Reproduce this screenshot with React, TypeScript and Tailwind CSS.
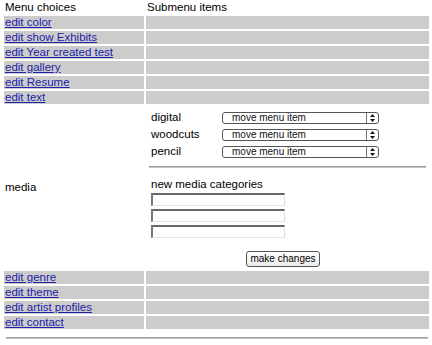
const TOP_LINKS = ['edit color', 'edit show Exhibits', 'edit Year created test', 'edit gallery', 'edit Resume', 'edit text']
const BOTTOM_LINKS = ['edit genre', 'edit theme', 'edit artist profiles', 'edit contact']
const MEDIA = ['digital', 'woodcuts', 'pencil']

function LinkRow({ label }: { label: string }) {
  return (
    <>
      <div className="h-[13px] bg-[#cccccc] pl-[1px] leading-[13px]">
        <a href="#" className="text-[#2222a8] underline underline-offset-[1px]">{label}</a>
      </div>
      <div className="h-[13px] bg-[#cccccc]" />
    </>
  )
}

function MoveSelect() {
  return (
    <div className="flex h-[12px] w-[157px] items-center rounded-[3px] border border-[#555] bg-white">
      <span className="flex-1 pl-[9px] font-['Liberation_Sans',Arial,sans-serif] text-[10px] leading-[10px] text-[#111]">
        move menu item
      </span>
      <div className="flex h-full w-[12px] items-center justify-center border-l border-[#777]">
        <svg width="5" height="8" viewBox="0 0 5 8">
          <path d="M2.5 0 L5 3 L0 3 Z M0 5 L5 5 L2.5 8 Z" fill="#111" />
        </svg>
      </div>
    </div>
  )
}

function TextBox() {
  return (
    <div className="ml-[5px] h-[13px] w-[134px] border-t-2 border-l-2 border-r border-b border-t-[#666] border-l-[#777] border-r-[#ddd] border-b-[#e4e4e4] bg-white" />
  )
}

export default function App() {
  return (
    <div className="min-h-screen bg-white font-['Liberation_Sans',Arial,sans-serif] text-[11.5px] text-black">
      <div className="pl-[4px] pt-[1px]">
        <div className="grid grid-cols-[140px_283px] gap-[2px]">
          <div className="h-[13px] pl-[1px] leading-[13px]">Menu choices</div>
          <div className="h-[13px] pl-[1px] leading-[13px]">Submenu items</div>

          {TOP_LINKS.map(l => <LinkRow key={l} label={l} />)}

          {/* media block */}
          <div className="flex h-[163px] items-center pl-[1px] leading-[13px]">media</div>
          <div className="flex h-[163px] flex-col pt-[3px]">
            {MEDIA.map(m => (
              <div key={m} className="flex h-[17px] items-center pl-[5px]">
                <span className="w-[71px] leading-[13px]">{m}</span>
                <MoveSelect />
              </div>
            ))}
            <div className="mx-[3px] mt-[6px] h-[2px] border-t border-[#9c9c9c] bg-[#c4c4c4]" />
            <div className="ml-[5px] mt-[10px] h-[13px] leading-[13px]">new media categories</div>
            <div className="mt-[2px] flex flex-col gap-[3px]">
              <TextBox />
              <TextBox />
              <TextBox />
            </div>
            <button className="ml-[100px] mt-[13px] h-[16px] w-[74px] rounded-[3px] border border-[#555] bg-gradient-to-b from-white to-[#ececec] font-['Liberation_Sans',Arial,sans-serif] text-[10px] leading-[14px] text-black">
              make changes
            </button>
          </div>

          {BOTTOM_LINKS.map(l => <LinkRow key={l} label={l} />)}
        </div>
      </div>
      <div className="ml-[6px] mt-[8px] h-[2px] w-[422px] border-t border-[#9c9c9c] bg-[#c4c4c4]" />
    </div>
  )
}
